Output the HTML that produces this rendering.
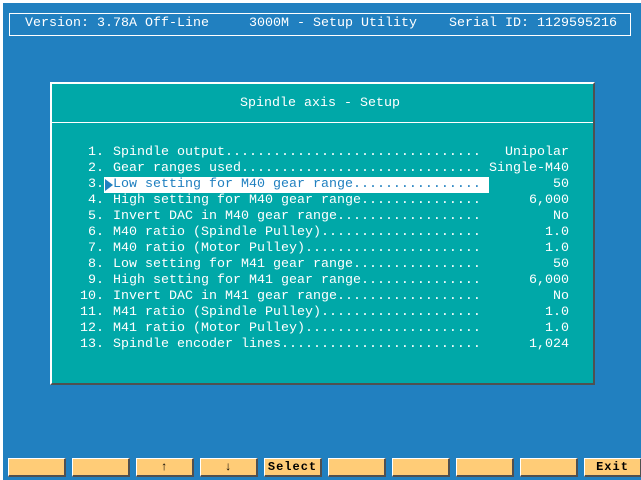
<!DOCTYPE html>
<html><head><style>
*{margin:0;padding:0;box-sizing:border-box}
body{width:641px;height:480px;background:#2180c0;position:relative;overflow:hidden;font-family:"Liberation Mono","DejaVu Sans Mono",monospace;font-size:13.33px;color:#fff}
#frame{position:absolute;left:0;top:0;width:641px;height:480px;border-left:3px solid #fff;border-top:3px solid #fff}
#hdr{position:absolute;left:9px;top:13px;width:622px;height:23px;border:1px solid #fff}
.t{position:absolute;white-space:pre;line-height:16px}
#panel{position:absolute;left:50px;top:82px;width:545px;height:303px;background:#00a8a8;border-top:2px solid #fff;border-left:2px solid #fff;border-right:2px solid #505050;border-bottom:2px solid #505050}
#sep{position:absolute;left:0;right:0;top:38px;height:1px;background:#fff}
#hl{position:absolute;left:104px;top:177px;width:385px;height:16px;background:#fff}
.b{position:absolute;top:458px;width:58px;height:19px;background:#ffcc77;border-top:1px solid #fff;border-left:1px solid #fff;border-right:2px solid #505050;border-bottom:2px solid #505050;color:#000;font-weight:bold;font-size:12px;text-align:center;line-height:16px;letter-spacing:1px}
</style></head><body>
<div id="frame"></div>
<div id="hdr"></div>
<div class="t" style="left:25px;top:16px">Version: 3.78A Off-Line</div>
<div class="t" style="left:249px;top:16px">3000M - Setup Utility</div>
<div class="t" style="left:449px;top:16px">Serial ID: 1129595216</div>
<div id="panel"><div id="sep"></div></div>
<div class="t" style="left:240px;top:96px">Spindle axis - Setup</div>
<div id="hl"></div>
<svg style="position:absolute;left:105px;top:179px" width="9" height="12"><polygon points="0,0 8,6 0,12" fill="#2180c0"/></svg>
<div class="t" style="left:113px;top:145px">Spindle output................................
Gear ranges used..............................

High setting for M40 gear range...............
Invert DAC in M40 gear range..................
M40 ratio (Spindle Pulley)....................
M40 ratio (Motor Pulley)......................
Low setting for M41 gear range................
High setting for M41 gear range...............
Invert DAC in M41 gear range..................
M41 ratio (Spindle Pulley)....................
M41 ratio (Motor Pulley)......................
Spindle encoder lines.........................</div>
<div class="t" style="left:113px;top:177px;color:#2180c0">Low setting for M40 gear range................</div>
<div class="t" style="left:80px;top:145px"> 1.
 2.
 3.
 4.
 5.
 6.
 7.
 8.
 9.
10.
11.
12.
13.</div>
<div class="t" style="left:480px;top:145px;width:89px;text-align:right">Unipolar
Single-M40
50
6,000
No
1.0
1.0
50
6,000
No
1.0
1.0
1,024</div>
<div class="b" style="left:8px"></div>
<div class="b" style="left:72px"></div>
<div class="b" style="left:136px">↑</div>
<div class="b" style="left:200px">↓</div>
<div class="b" style="left:264px">Select</div>
<div class="b" style="left:328px"></div>
<div class="b" style="left:392px"></div>
<div class="b" style="left:456px"></div>
<div class="b" style="left:520px"></div>
<div class="b" style="left:584px">Exit</div>
</body></html>
